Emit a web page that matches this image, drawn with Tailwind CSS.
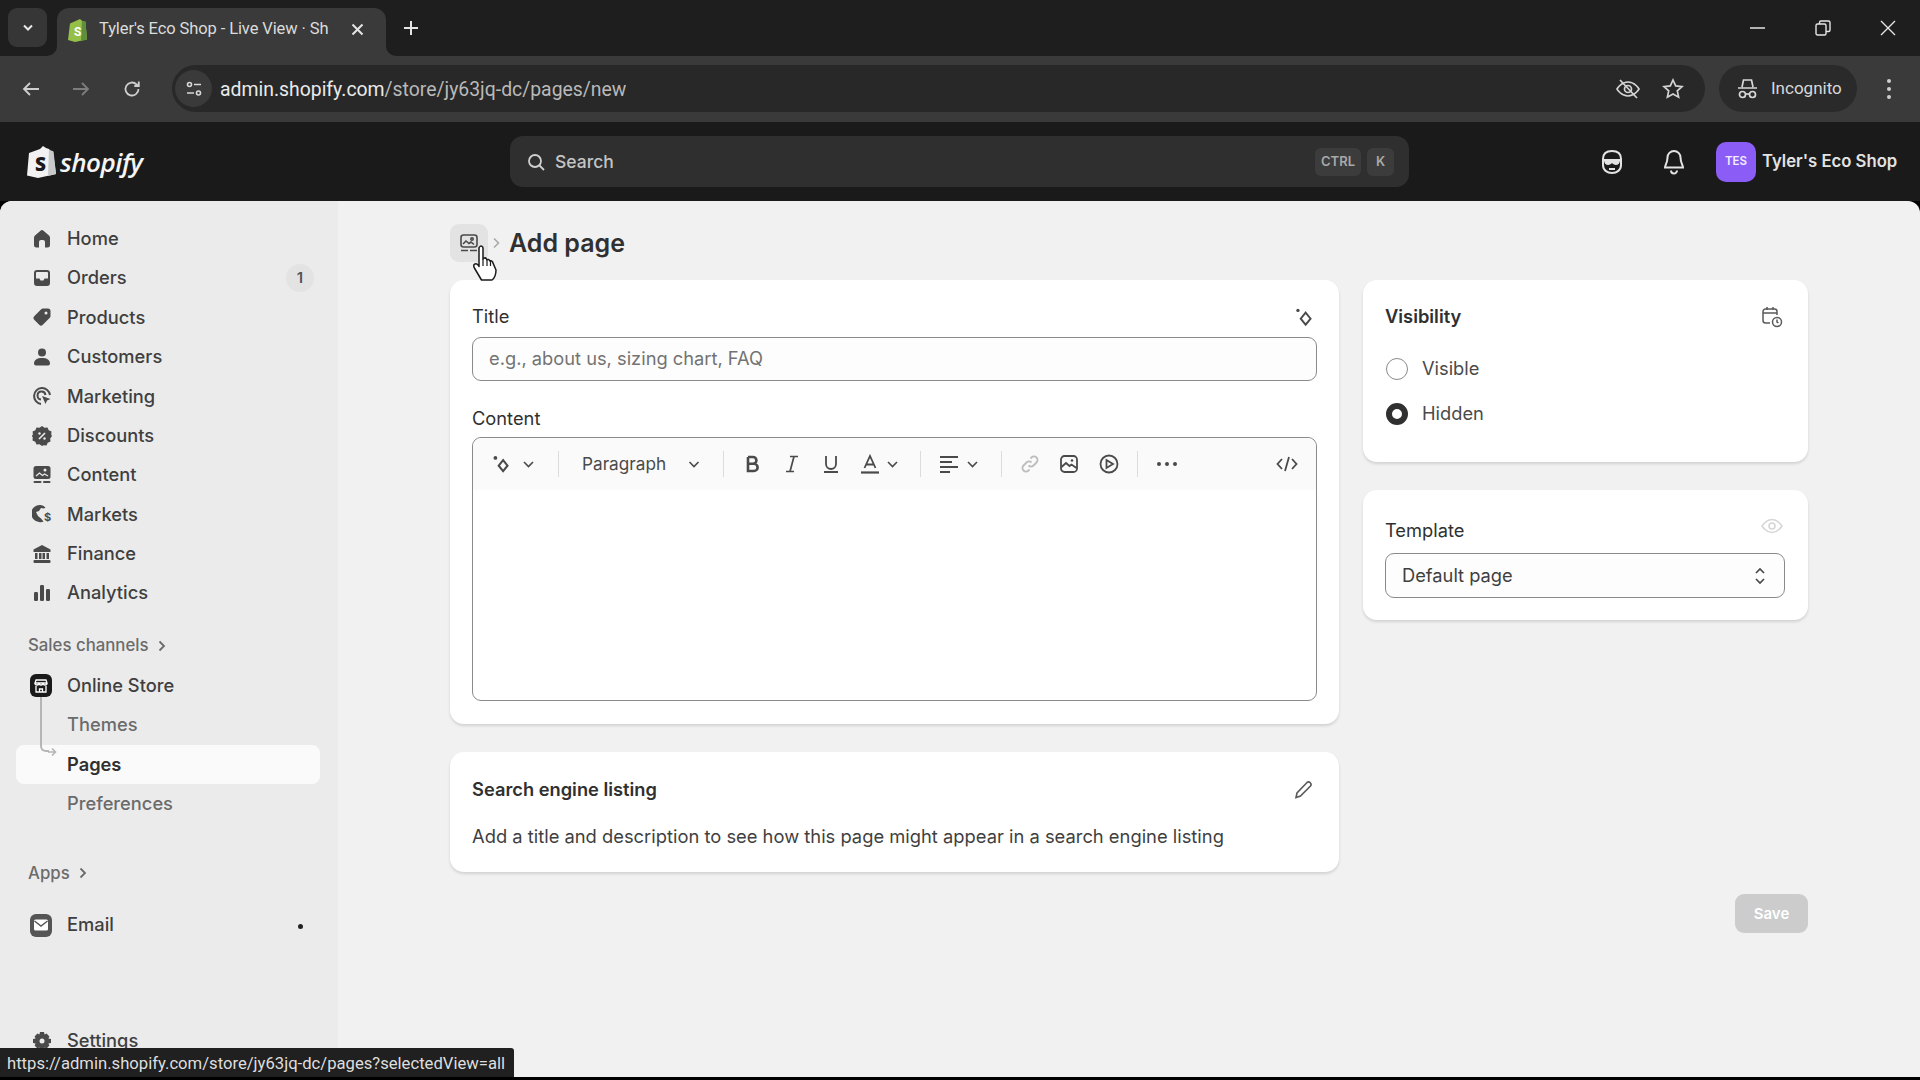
<!DOCTYPE html>
<html><head><meta charset="utf-8"><script src="https://cdn.jsdelivr.net/npm/@tailwindcss/browser@4"></script></head>
<body class="w-[1920px] h-[1080px] overflow-hidden bg-black font-['Inter',sans-serif] relative">
<!-- tab strip -->
<div class="h-[56px] bg-[#1e1e1e] flex items-end relative font-['Roboto',sans-serif]">
  <div class="w-[39px] h-[39px] ml-[8px] mb-[9px] rounded-[9px] bg-[#363636] flex items-center justify-center">
    <svg width="12" height="8" viewBox="0 0 12 8" fill="none" stroke="#e8e8e8" stroke-width="2"><path d="M2 1.5l4 4 4-4"/></svg>
  </div>
  <div class="relative ml-[10px] w-[329px] h-[48px] bg-[#3a3a3a] rounded-t-[12px] flex items-center pl-[10px] pb-[5px]">
    <svg class="absolute -left-[10px] bottom-0" width="10" height="10" viewBox="0 0 10 10"><path d="M0 10a10 10 0 0 0 10-10v10z" fill="#3a3a3a"/></svg>
    <svg class="absolute -right-[10px] bottom-0" width="10" height="10" viewBox="0 0 10 10"><path d="M10 10A10 10 0 0 1 0 0v10z" fill="#3a3a3a"/></svg>
    <svg width="21" height="24" viewBox="0 0 21 24"><path d="M3 5.5L13 1l2 1.8 3.5 1L20 21.5 8 24 1 22z" fill="#95bf47"/><path d="M15 2.8l3.5 1L20 21.5 14 23z" fill="#5e8e3e"/><text x="7" y="18" font-size="12" font-weight="700" fill="#fff" font-family="Roboto">S</text></svg>
    <span class="ml-[11px] w-[240px] overflow-hidden whitespace-nowrap text-[16.5px] text-[#dcdcdc] tracking-[-0.1px]">Tyler's Eco Shop - Live View · Sh</span>
    <svg class="ml-[12px]" width="13" height="13" viewBox="0 0 13 13" stroke="#e5e5e5" stroke-width="2"><path d="M1.5 1.5l10 10M11.5 1.5l-10 10"/></svg>
  </div>
  <svg class="ml-[17px] mb-[20px]" width="16" height="16" viewBox="0 0 16 16" stroke="#e5e5e5" stroke-width="2"><path d="M8 1v14M1 8h14"/></svg>
  <div class="ml-auto flex items-center h-[56px] mb-0 pb-[0px]">
    <svg width="16" height="16" viewBox="0 0 16 16" stroke="#e5e5e5" stroke-width="1.5"><path d="M0 8h15"/></svg>
    <svg class="ml-[49px]" width="16" height="16" viewBox="0 0 16 16" fill="none" stroke="#e5e5e5" stroke-width="1.4"><rect x="1" y="4" width="10" height="11" rx="1.5"/><path d="M4.5 4V2.5A1.5 1.5 0 0 1 6 1h7.5A1.5 1.5 0 0 1 15 2.5V10a1.5 1.5 0 0 1-1.5 1.5H11"/></svg>
    <svg class="ml-[49px] mr-[24px]" width="16" height="16" viewBox="0 0 16 16" stroke="#e5e5e5" stroke-width="1.4"><path d="M1 1l14 14M15 1L1 15"/></svg>
  </div>
</div>
<!-- toolbar -->
<div class="h-[66px] bg-[#3a3a3a] flex items-center font-['Roboto',sans-serif] pb-[1px]">
  <svg class="ml-[22px]" width="18" height="16" viewBox="0 0 18 16" fill="none" stroke="#cfcfcf" stroke-width="1.8"><path d="M17 8H2M8 2L2 8l6 6"/></svg>
  <svg class="ml-[32px]" width="18" height="16" viewBox="0 0 18 16" fill="none" stroke="#7d7d7d" stroke-width="1.8"><path d="M1 8h15M10 2l6 6-6 6"/></svg>
  <svg class="ml-[33px]" width="18" height="18" viewBox="0 0 18 18" fill="none" stroke="#cfcfcf" stroke-width="1.8"><path d="M15.5 9a6.5 6.5 0 1 1-2-4.7L15.5 6"/><path d="M15.8 1.5V6h-4.5" /></svg>
  <div class="ml-[31px] w-[1533px] h-[47px] rounded-full bg-[#282828] flex items-center">
    <div class="w-[37px] h-[37px] ml-[3px] rounded-full bg-[#3a3a3a] flex items-center justify-center">
      <svg width="18" height="18" viewBox="0 0 18 18" fill="none" stroke="#d8d8d8" stroke-width="1.6"><circle cx="4.5" cy="4.5" r="2"/><path d="M9 4.5h7M2 13h7"/><circle cx="13.5" cy="13" r="2"/></svg>
    </div>
    <span class="ml-[8px] mt-[2px] text-[19.400px] text-[#b9b9b9] tracking-[0px]"><span class="text-[#eaeaea]">admin.shopify.com</span>/store/jy63jq-dc/pages/new</span>
    <svg class="ml-auto" width="26" height="24" viewBox="0 0 26 24" fill="none" stroke="#d4d4d4" stroke-width="1.7"><path d="M2 12s4-7 11-7 11 7 11 7-4 7-11 7-11-7-11-7z"/><circle cx="13" cy="12" r="3.5"/><path d="M5 3l17 18"/></svg>
    <svg class="ml-[21px] mr-[21px]" width="22" height="22" viewBox="0 0 22 22" fill="none" stroke="#d4d4d4" stroke-width="1.7"><path d="M11 2l2.7 5.9 6.3.7-4.7 4.3 1.3 6.3L11 16l-5.6 3.2 1.3-6.3L2 8.600l6.300-.7z"/></svg>
  </div>
  <div class="ml-[14px] w-[138px] h-[47px] rounded-full bg-[#2a2a2a] flex items-center pl-[18px]">
    <svg width="21" height="22" viewBox="0 0 21 22" fill="none" stroke="#d8d8d8" stroke-width="1.7"><path d="M5 9l1.500-7h8L16 9M1 10h19"/><circle cx="5.500" cy="16.500" r="3"/><circle cx="15.500" cy="16.500" r="3"/><path d="M8.500 16h4"/></svg>
    <span class="ml-[13px] text-[17px] text-[#d8d8d8]">Incognito</span>
  </div>
  <div class="ml-[30px] flex flex-col gap-[4px]"><i class="w-[4px] h-[4px] rounded-full bg-[#cfcfcf]"></i><i class="w-[4px] h-[4px] rounded-full bg-[#cfcfcf]"></i><i class="w-[4px] h-[4px] rounded-full bg-[#cfcfcf]"></i></div>
</div>
<!-- shopify bar -->
<div class="h-[79px] bg-[#1a1a1a] flex items-center">
  <div class="w-[510px] pl-[27px] flex items-center">
    <svg width="30" height="34" viewBox="0 0 30 34"><path d="M2 8l11-4 3-3 3 2 3 1 1 2 3 .5L29 29 11 33 0 30.500z" fill="#f2f2f2"/><path d="M22 4.500l4.500 2L29 29l-8 2z" fill="#c9c9c9"/><text x="8" y="26" font-size="19" font-weight="800" font-family="Open Sans" fill="#1a1a1a">S</text></svg>
    <span class="ml-[3px] text-[26px] font-semibold italic text-[#f5f5f5] font-['Open_Sans',sans-serif] tracking-[-0.5px] leading-none">shopify</span>
  </div>
  <div class="w-[899px] h-[51px] rounded-[13px] bg-[#2f2f2f] flex items-center pl-[16px]">
    <svg width="20" height="20" viewBox="0 0 20 20" fill="none" stroke="#d0d0d0" stroke-width="1.800"><circle cx="9" cy="9" r="6"/><path d="M13.500 13.500L18 18"/></svg>
    <span class="ml-[9px] mt-[1px] text-[17.500px] text-[#c4c4c4] font-medium">Search</span>
    <div class="ml-auto w-[46px] h-[28px] rounded-[6px] bg-[#3c3c3c] text-[#a9a9a9] text-[13px] font-semibold flex items-center justify-center">CTRL</div>
    <div class="ml-[6px] mr-[15px] w-[27px] h-[28px] rounded-[6px] bg-[#3c3c3c] text-[#a9a9a9] text-[13px] font-semibold flex items-center justify-center">K</div>
  </div>
  <svg class="ml-[191px]" width="24" height="26" viewBox="0 0 24 26" fill="none" stroke="#e3e3e3" stroke-width="2"><path d="M3 10C3 4 7 2 12 2s9 2 9 8v6c0 5-4 8-9 8s-9-3-9-8z"/><path d="M3 11h18" /><path d="M5 11c0 3 1 4 3.500 4S11 14 12 12c1 2 1 3 3.500 3S19 14 19 11z" fill="#e3e3e3"/><path d="M9 20h6"/></svg>
  <svg class="ml-[39px]" width="22" height="26" viewBox="0 0 22 26" fill="none" stroke="#e3e3e3" stroke-width="2"><path d="M11 2a6.500 6.500 0 0 0-6.500 6.500c0 5-2.500 8-2.500 10h18c0-2-2.500-5-2.500-10A6.500 6.500 0 0 0 11 2z"/><path d="M8 21.500a3 3 0 0 0 6 0"/></svg>
  <div class="ml-[31px] w-[40px] h-[40px] rounded-[10px] bg-[#8b5cf6] text-white/90 text-[11.500px] font-semibold flex items-center justify-center">TES</div>
  <span class="ml-[6px] text-[16.700px] font-semibold text-[#e3e3e3] whitespace-nowrap">Tyler's Eco Shop</span>
</div>
<!-- main -->
<div class="h-[876px] bg-[#f1f1f1] rounded-t-[12px] overflow-hidden flex">
  <aside class="w-[338px] shrink-0 bg-[#ebebeb] pt-[18px] text-[18.300px] font-medium text-[#3f3f3f]">
    <div class="h-[39.4px] flex items-center pl-[32px] gap-[15px]"><svg width="20" height="20" viewBox="0 0 20 20" fill="#4a4a4a"><path d="M8.500 1.700a2.300 2.300 0 0 1 3 0l5.500 4.800c.6.500 1 1.300 1 2.100V16a2.500 2.500 0 0 1-2.500 2.500H13V13a2 2 0 0 0-2-2H9a2 2 0 0 0-2 2v5.500H4.500A2.500 2.500 0 0 1 2 16V8.600c0-.8.400-1.600 1-2.100z"/></svg>Home</div>
    <div class="h-[39.4px] flex items-center pl-[32px] gap-[15px]"><svg width="20" height="20" viewBox="0 0 20 20" fill="#4a4a4a"><path fill-rule="evenodd" d="M5 2h10a3 3 0 0 1 3 3v10a3 3 0 0 1-3 3H5a3 3 0 0 1-3-3V5a3 3 0 0 1 3-3zM4 10.500h3.500l1 2h3l1-2H16V5a1 1 0 0 0-1-1H5a1 1 0 0 0-1 1z"/></svg>Orders<span class="ml-auto mr-[24px] w-[28px] h-[28px] rounded-full bg-[#e3e3e3] text-[15px] text-[#555] font-semibold flex items-center justify-center">1</span></div>
    <div class="h-[39.4px] flex items-center pl-[32px] gap-[15px]"><svg width="20" height="20" viewBox="0 0 20 20" fill="#4a4a4a"><path fill-rule="evenodd" d="M11 1.500h5A2.500 2.500 0 0 1 18.500 4v5c0 .7-.3 1.300-.7 1.800l-7 7a2.500 2.500 0 0 1-3.600 0l-5-5a2.500 2.500 0 0 1 0-3.600l7-7c.5-.4 1.100-.7 1.800-.7zM14 7.500a1.500 1.500 0 1 0 0-3 1.500 1.500 0 0 0 0 3z"/></svg>Products</div>
    <div class="h-[39.4px] flex items-center pl-[32px] gap-[15px]"><svg width="20" height="20" viewBox="0 0 20 20" fill="#4a4a4a"><circle cx="10" cy="5.500" r="4"/><path d="M2 16.500c0-3.500 3-5.500 8-5.500s8 2 8 5.500a2 2 0 0 1-2 2H4a2 2 0 0 1-2-2z"/></svg>Customers</div>
    <div class="h-[39.4px] flex items-center pl-[32px] gap-[15px]"><svg width="20" height="20" viewBox="0 0 20 20" fill="none" stroke="#4a4a4a" stroke-width="2"><path d="M18 9a8 8 0 1 0-9 9"/><path d="M13.500 9a4 4 0 1 0-4.500 4.500"/><path d="M10 10l8.500 3-3.500 1.500-1.500 3.500z" fill="#4a4a4a" stroke="none"/></svg>Marketing</div>
    <div class="h-[39.4px] flex items-center pl-[32px] gap-[15px]"><svg width="20" height="20" viewBox="0 0 20 20"><path fill="#4a4a4a" d="M10 0l2.500 1.800 3-.3 1.200 2.800 2.800 1.200-.3 3L20 10l-1.800 2.500.3 3-2.800 1.200-1.200 2.800-3-.3L10 20l-2.500-1.800-3 .3-1.200-2.800L.5 14.500l.3-3L-.1 10l1-1.500-.3-3 2.800-1.200L4.500 1.500l3 .3z"/><path d="M7 13l6-6" stroke="#ebebeb" stroke-width="1.600"/><circle cx="7.500" cy="7.500" r="1.200" fill="#ebebeb"/><circle cx="12.500" cy="12.500" r="1.200" fill="#ebebeb"/></svg>Discounts</div>
    <div class="h-[39.4px] flex items-center pl-[32px] gap-[15px]"><svg width="20" height="20" viewBox="0 0 20 20"><rect x="1.500" y="1" width="17" height="13" rx="2.500" fill="#4a4a4a"/><path d="M4 11l3.500-3 3 2.500 2-1.500L16 11" stroke="#ebebeb" stroke-width="1.200" fill="none"/><circle cx="13" cy="5" r="1.500" fill="#ebebeb"/><rect x="1.500" y="16" width="8" height="2" rx="1" fill="#4a4a4a"/><rect x="11" y="16" width="7.500" height="2" rx="1" fill="#4a4a4a"/></svg>Content</div>
    <div class="h-[39.4px] flex items-center pl-[32px] gap-[15px]"><svg width="20" height="20" viewBox="0 0 20 20"><path fill="#4a4a4a" d="M8.500 1A8.500 8.500 0 0 0 7 18c2 .4 3.500.1 4.500-.5L9 14.500l-3-2.500L4 8l3-1 2-3 3 .5 1.500-1A8.500 8.500 0 0 0 8.500 1z"/><text x="12" y="17" font-size="11" font-weight="700" fill="#4a4a4a" font-family="Inter">$</text></svg>Markets</div>
    <div class="h-[39.4px] flex items-center pl-[32px] gap-[15px]"><svg width="20" height="20" viewBox="0 0 20 20" fill="#4a4a4a"><path d="M10 1l8.500 4.500V8h-17V5.500z"/><path d="M3 9h2.500v6H3zM7 9h2.500v6H7zM10.500 9H13v6h-2.500zM14.500 9H17v6h-2.500z"/><rect x="1.500" y="16" width="17" height="3" rx="1"/></svg>Finance</div>
    <div class="h-[39.4px] flex items-center pl-[32px] gap-[15px]"><svg width="20" height="20" viewBox="0 0 20 20" fill="#4a4a4a"><rect x="2" y="9" width="4" height="9" rx="1.200"/><rect x="8" y="2" width="4" height="16" rx="1.200"/><rect x="14" y="6" width="4" height="12" rx="1.200"/></svg>Analytics</div>
    <div class="mt-[16px] h-[34px] pl-[28px] flex items-center gap-[9px] text-[16.800px] text-[#6b6b6b]">Sales channels<svg width="8" height="12" viewBox="0 0 8 12" fill="none" stroke="#6b6b6b" stroke-width="1.800"><path d="M1.500 1.500L6 6l-4.500 4.500"/></svg></div>
    <div class="relative mt-[3px] h-[39.4px] flex items-center pl-[30px] gap-[15px]"><span class="w-[22px] h-[23px] rounded-[6px] bg-[#1a1a1a] flex items-center justify-center"><svg width="16" height="16" viewBox="0 0 16 16" fill="none" stroke="#fff" stroke-width="1.300"><path d="M3 2h10l1 3H2zM2 5a2 2 0 0 0 4 0 2 2 0 0 0 4 0 2 2 0 0 0 4 0M3 8v6h10V8"/><path d="M6.500 14v-3h3v3"/></svg></span>Online Store</div>
    <div class="relative">
      <div class="absolute left-[40px] -top-[8px] w-[9px] h-[55px] border-l-[2px] border-b-[2px] border-[#b5b5b5] rounded-bl-[6px]"></div>
      <svg class="absolute left-[48px] top-[42px]" width="9" height="10" viewBox="0 0 9 10" fill="none" stroke="#b5b5b5" stroke-width="1.600"><path d="M0 5h7M4 1.500L7.500 5 4 8.500"/></svg>
      <div class="h-[39.4px] flex items-center pl-[67px] text-[#6b6b6b]">Themes</div>
      <div class="h-[39.4px] ml-[16px] w-[304px] rounded-[8px] bg-[#fafafa] flex items-center pl-[51px] font-semibold text-[#303030]">Pages</div>
      <div class="h-[39.4px] flex items-center pl-[67px] text-[#6b6b6b]">Preferences</div>
    </div>
    <div class="mt-[33px] h-[34px] pl-[28px] flex items-center gap-[9px] text-[16.800px] text-[#6b6b6b]">Apps<svg width="8" height="12" viewBox="0 0 8 12" fill="none" stroke="#6b6b6b" stroke-width="1.800"><path d="M1.500 1.500L6 6l-4.500 4.500"/></svg></div>
    <div class="mt-[15px] h-[39.4px] flex items-center pl-[30px] gap-[15px]"><span class="w-[22px] h-[23px] rounded-[6px] bg-[#555] flex items-center justify-center"><svg width="16" height="14" viewBox="0 0 16 14"><rect x="1" y="1.500" width="14" height="11" rx="1.500" fill="#fff"/><path d="M1.500 3L8 8l6.500-5" fill="none" stroke="#555" stroke-width="1.400"/></svg></span>Email<i class="ml-auto mr-[35px] w-[5px] h-[5px] rounded-full bg-[#222] mt-[2px]"></i></div>
    <div class="mt-[76px] h-[39.4px] flex items-center pl-[32px] gap-[15px]"><svg width="20" height="20" viewBox="0 0 20 20"><path fill="#4a4a4a" d="M8 1h4l.6 2.600 2-1 2.800 2.800-1 2 2.600.6v4l-2.600.6 1 2-2.800 2.800-2-1L12 19H8l-.6-2.600-2 1L2.600 14.600l1-2L1 12V8l2.600-.6-1-2 2.800-2.800 2 1z"/><circle cx="10" cy="10" r="2.500" fill="#ebebeb"/></svg>Settings</div>
  </aside>
  <main class="flex-1 pl-[112px] pt-[23px] text-[#303030]">
    <div class="flex items-center h-[38px]">
      <div class="w-[38px] h-[38px] rounded-[9px] bg-[#e3e3e3] flex items-center justify-center"><svg width="20" height="20" viewBox="0 0 20 20" fill="none" stroke="#4a4a4a" stroke-width="1.600"><rect x="2" y="2" width="16" height="12" rx="2.500"/><path d="M4 11l3-3 3 2.500 2-1.500 3 2.500"/><circle cx="13" cy="6" r="1.200"/><path d="M2 17.500h7M11 17.500h7"/></svg></div>
      <svg class="ml-[5px]" width="7" height="12" viewBox="0 0 7 12" fill="none" stroke="#a8a8a8" stroke-width="1.500"><path d="M1 1.500L5.500 6 1 10.500"/></svg>
      <h1 class="ml-[9px] text-[25px] font-semibold text-[#303030] leading-none">Add page</h1>
    </div>
    <div class="mt-[18px] flex items-start gap-[24px]">
      <div class="w-[889px] flex flex-col gap-[28px]">
        <section class="h-[444px] rounded-[14px] bg-white shadow-[0_2px_3px_rgba(0,0,0,0.13)] px-[22px] pt-[26px]">
          <div class="flex items-center justify-between h-[22px] text-[18.300px] font-normal">Title<svg class="mr-[2px]" width="22" height="22" viewBox="0 0 20 20" fill="none" stroke="#4a4a4a" stroke-width="1.700"><circle cx="4.500" cy="4" r="1.500" fill="#4a4a4a" stroke="none"/><path d="M11.500 6l4.500 5.500-4.500 5.500L7 11.500z"/></svg></div>
          <div class="mt-[9px] h-[44px] rounded-[9px] border border-[#8a8a8a] bg-[#fdfdfd] flex items-center pl-[16px] text-[18.300px] text-[#737373]">e.g., about us, sizing chart, FAQ</div>
          <div class="mt-[27px] h-[22px] flex items-center text-[18.300px]">Content</div>
          <div class="mt-[7px] h-[264px] rounded-[9px] border border-[#8a8a8a] bg-white">
            <div class="h-[52px] bg-[#fafafa] rounded-t-[9px] flex items-center text-[#4a4a4a]">
              <svg class="ml-[18px]" width="22" height="22" viewBox="0 0 20 20" fill="none" stroke="#4a4a4a" stroke-width="1.900"><circle cx="4" cy="4.500" r="1.700" fill="#4a4a4a" stroke="none"/><path d="M11 6.500l4 5-4 5-4-5z"/></svg>
              <svg class="ml-[10px]" width="11" height="7" viewBox="0 0 11 7" fill="none" stroke="#4a4a4a" stroke-width="1.600"><path d="M1 1l4.500 4.500L10 1"/></svg>
              <i class="ml-[24px] w-px h-[26px] bg-[#dcdcdc]"></i>
              <span class="ml-[23px] w-[88px] text-[17.200px] whitespace-nowrap">Paragraph</span>
              <svg class="ml-[18px]" width="12" height="7" viewBox="0 0 11 7" fill="none" stroke="#4a4a4a" stroke-width="1.600"><path d="M1 1l4.500 4.500L10 1"/></svg>
              <i class="ml-[23px] w-px h-[26px] bg-[#dcdcdc]"></i>
              <svg class="ml-[20px]" width="18" height="20" viewBox="0 0 18 20" fill="none" stroke="#4a4a4a" stroke-width="2.600"><path d="M4 3v14h6a3.500 3.500 0 0 0 0-7.200H4M4 3h5a3.300 3.300 0 0 1 0 6.800"/></svg>
              <svg class="ml-[21px]" width="18" height="20" viewBox="0 0 18 20" fill="none" stroke="#4a4a4a" stroke-width="1.700"><path d="M7 2.500h8M3 17.500h8M11 2.500L7 17.500"/></svg>
              <svg class="ml-[21px]" width="18" height="20" viewBox="0 0 18 20" fill="none" stroke="#4a4a4a" stroke-width="1.800"><path d="M4 2v8a5 5 0 0 0 10 0V2M2 18h14"/></svg>
              <svg class="ml-[20px]" width="20" height="20" viewBox="0 0 20 20" fill="none" stroke="#4a4a4a" stroke-width="1.800"><path d="M4.500 14L10 2l5.500 12M6 10.500h8"/><path d="M1 18.500h18" stroke-width="2.200"/></svg>
              <svg class="ml-[7px]" width="11" height="7" viewBox="0 0 11 7" fill="none" stroke="#4a4a4a" stroke-width="1.600"><path d="M1 1l4.500 4.500L10 1"/></svg>
              <i class="ml-[22px] w-px h-[26px] bg-[#dcdcdc]"></i>
              <svg class="ml-[18px]" width="20" height="18" viewBox="0 0 20 18" fill="none" stroke="#4a4a4a" stroke-width="1.800"><path d="M1 2h18M1 7h12M1 12h18M1 17h10"/></svg>
              <svg class="ml-[8px]" width="11" height="7" viewBox="0 0 11 7" fill="none" stroke="#4a4a4a" stroke-width="1.600"><path d="M1 1l4.500 4.500L10 1"/></svg>
              <i class="ml-[23px] w-px h-[26px] bg-[#dcdcdc]"></i>
              <svg class="ml-[18px]" width="20" height="20" viewBox="0 0 20 20" fill="none" stroke="#bdbdbd" stroke-width="1.800"><path d="M8.500 11.500a3.500 3.500 0 0 0 5 0l3-3a3.500 3.500 0 0 0-5-5l-1 1"/><path d="M11.500 8.500a3.500 3.500 0 0 0-5 0l-3 3a3.500 3.500 0 0 0 5 5l1-1"/></svg>
              <svg class="ml-[19px]" width="20" height="20" viewBox="0 0 20 20" fill="none" stroke="#4a4a4a" stroke-width="1.800"><rect x="2" y="2" width="16" height="16" rx="3.500"/><path d="M2.500 13L7 9l3.500 3 2-1.500L17.500 14"/><circle cx="13" cy="6.500" r="1.300" fill="#4a4a4a" stroke="none"/></svg>
              <svg class="ml-[20px]" width="20" height="20" viewBox="0 0 20 20" fill="none" stroke="#4a4a4a" stroke-width="1.800"><circle cx="10" cy="10" r="8.500"/><path d="M7.500 6l6.500 4-6.500 4z"/></svg>
              <i class="ml-[18px] w-px h-[26px] bg-[#dcdcdc]"></i>
              <svg class="ml-[18px]" width="22" height="6" viewBox="0 0 22 6" fill="#4a4a4a"><circle cx="3" cy="3" r="2"/><circle cx="11" cy="3" r="2"/><circle cx="19" cy="3" r="2"/></svg>
              <svg class="ml-auto mr-[18px]" width="22" height="18" viewBox="0 0 22 18" fill="none" stroke="#4a4a4a" stroke-width="1.800"><path d="M6 4L1.500 9 6 14M16 4l4.500 5-4.500 5M13 2L9 16"/></svg>
            </div>
          </div>
        </section>
        <section class="h-[120px] rounded-[14px] bg-white shadow-[0_2px_3px_rgba(0,0,0,0.13)] px-[22px] pt-[27px]">
          <div class="flex items-center justify-between h-[22px] text-[18.300px] font-semibold">Search engine listing<svg class="mr-[4px]" width="20" height="20" viewBox="0 0 20 20" fill="none" stroke="#5a5a5a" stroke-width="1.600"><path d="M14 2.500a2.500 2.500 0 0 1 3.500 3.500L7.500 16 3 17.500 4 13z"/></svg></div>
          <p class="mt-[24px] text-[18.350px] leading-[22px] text-[#3f3f3f] whitespace-nowrap">Add a title and description to see how this page might appear in a search engine listing</p>
        </section>
      </div>
      <div class="w-[445px] flex flex-col gap-[28px]">
        <section class="h-[182px] rounded-[14px] bg-white shadow-[0_2px_3px_rgba(0,0,0,0.13)] pl-[22px] pr-[23px] pt-[26px]">
          <div class="flex items-center justify-between h-[22px] text-[18.300px] font-semibold">Visibility<svg class="mr-[2px]" width="22" height="22" viewBox="0 0 22 22" fill="none" stroke="#5a5a5a" stroke-width="1.500"><path d="M9 17H4.500A2.500 2.500 0 0 1 2 14.500v-9A2.500 2.500 0 0 1 4.500 3h9A2.500 2.500 0 0 1 16 5.500V9M2 7h14M6 1v3M12 1v3"/><circle cx="16" cy="16" r="4.500"/><path d="M16 13.500V16l1.500 1"/></svg></div>
          <div class="mt-[30px] h-[22px] flex items-center text-[18.300px] text-[#4a4a4a]"><span class="w-[22px] h-[22px] ml-px rounded-full border border-[#8a8a8a] mr-[14px]"></span>Visible</div>
          <div class="mt-[23px] h-[22px] flex items-center text-[18.300px] text-[#4a4a4a]"><span class="w-[22px] h-[22px] ml-px rounded-full border-[6px] border-[#303030] mr-[14px]"></span>Hidden</div>
        </section>
        <section class="h-[130px] rounded-[14px] bg-white shadow-[0_2px_3px_rgba(0,0,0,0.13)] px-[22px] pt-[27px]">
          <div class="flex items-center justify-between h-[28px] text-[18.300px]">Template<svg class="mr-[3px] -mt-[10px]" width="22" height="16" viewBox="0 0 22 16" fill="none" stroke="#d6d6d6" stroke-width="1.600"><path d="M1 8s4-6.500 10-6.500S21 8 21 8s-4 6.500-10 6.500S1 8 1 8z"/><circle cx="11" cy="8" r="3"/></svg></div>
          <div class="mt-[8px] w-[400px] h-[45px] rounded-[9px] border border-[#8a8a8a] bg-[#fdfdfd] flex items-center pl-[16px] text-[18.300px] text-[#3f3f3f]">Default page<svg class="ml-auto mr-[18px]" width="12" height="20" viewBox="0 0 12 20" fill="none" stroke="#4a4a4a" stroke-width="1.700"><path d="M2 7l4-4 4 4M2 13l4 4 4-4"/></svg></div>
        </section>
      </div>
    </div>
    <div class="w-[1358px] mt-[22px] flex justify-end"><div class="w-[73px] h-[39px] rounded-[9px] bg-[#cccccc] text-white text-[15px] font-semibold flex items-center justify-center pt-[2px]">Save</div></div>
  </main>
</div>
<!-- hover status -->
<div class="absolute left-0 top-[1048px] w-[514px] h-[29px] bg-[#202020] rounded-tr-[3px] flex items-center pl-[7px] pt-[3px] text-[16.650px] text-[#dedede] font-['Roboto',sans-serif] whitespace-nowrap z-10">https://admin.shopify.com/store/jy63jq-dc/pages?selectedView=all</div>
<!-- cursor -->
<svg class="absolute left-[472px] top-[244px] z-10" width="26" height="38" viewBox="0 0 26 38"><path d="M8 2.500c1.300-1 3 0 3 1.700V15l1-.8c.9-.5 2 0 2.400.7l.6.800c.8-.6 2-.3 2.500.5l.5.800c.9-.4 2-.1 2.500.9L24 26c0 5-2 8.500-4 10H9.500L3 25c-1.500-2.500-2-4 0-5 1.500-.6 3 .6 4 2.500V4c0-.6.400-1.100 1-1.500z" fill="#fff" stroke="#1a1a1a" stroke-width="1.500" stroke-linejoin="round"/><path d="M11 15v7M15 15.500V22M18.500 17v5" stroke="#1a1a1a" stroke-width="1.200"/></svg>
</body></html>
